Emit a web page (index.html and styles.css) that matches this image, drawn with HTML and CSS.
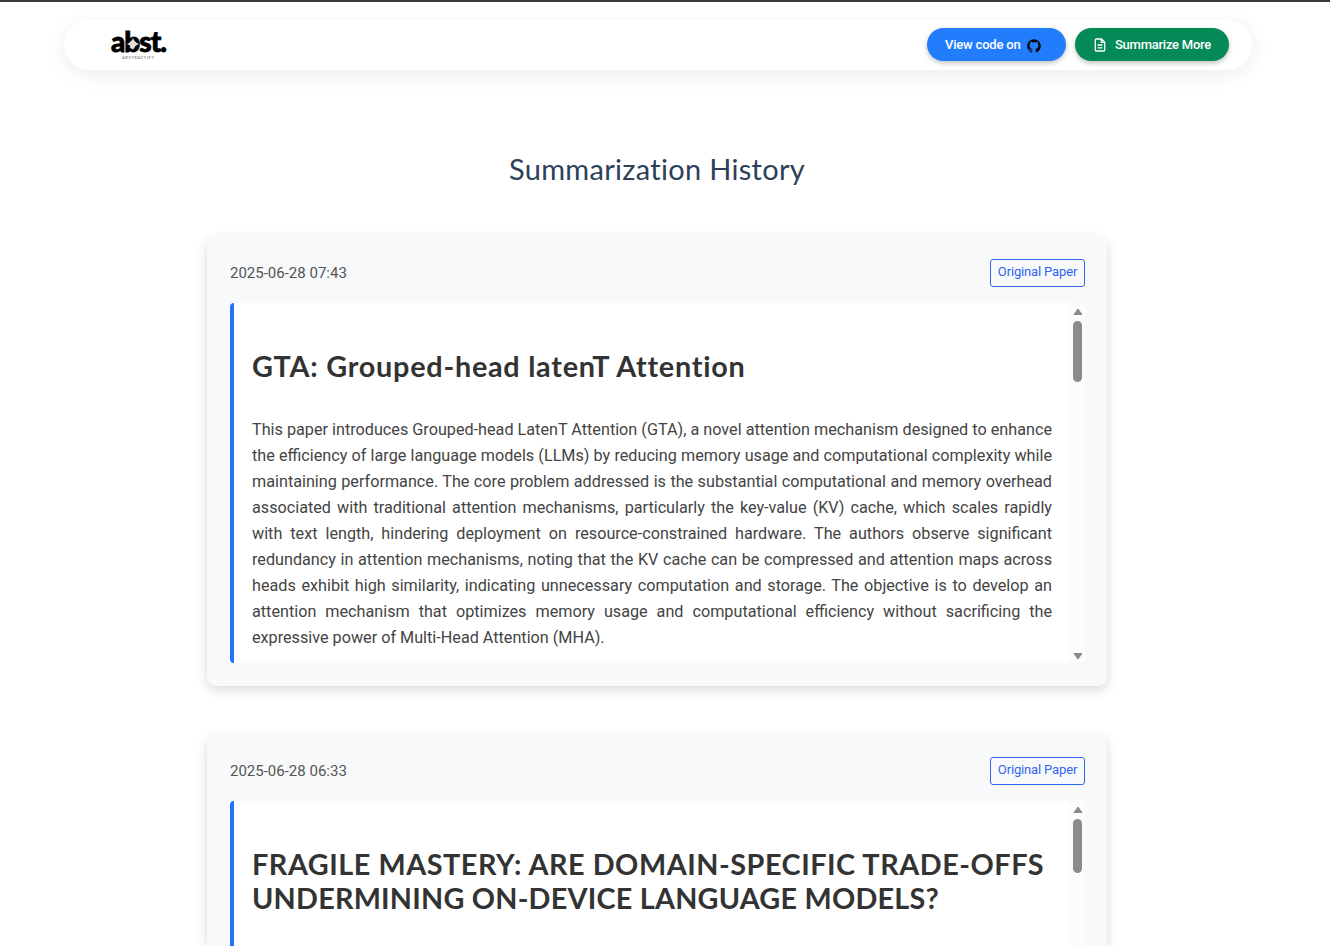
FILE: index.html
```html
<!DOCTYPE html>
<html lang="en">
<head>
<meta charset="utf-8">
<title>Summarization History</title>
<link rel="stylesheet" href="styles.css">
</head>
<body>
<header class="navbar">
  <div class="logo">
    <div class="logo-word"><span>abst.</span>
      <svg class="logo-star" width="12" height="12" viewBox="0 0 12 12"><path d="M6 0Q7.500 4.500 12 6Q7.500 7.500 6 12Q4.500 7.500 0 6Q4.500 4.500 6 0Z" fill="#e4e0d8"/></svg>
    </div>
    <div class="logo-sub">ABSTRACTIFY</div>
  </div>
  <nav class="actions">
    <a class="btn btn-code"><span class="code-label">View code on</span>
      <svg class="github" width="14" height="14" viewBox="0 0 16 16"><path fill="#080808" d="M8 .2C3.6.2.2 3.7.2 8c0 3.5 2.2 6.400 5.300 7.500.4.1.5-.2.5-.4v-1.500c-2.200.5-2.700-1-2.700-1-.3-.9-.8-1.200-.8-1.200-.7-.5.1-.5.1-.5.8.1 1.200.8 1.200.8.7 1.200 1.800.9 2.300.7.1-.5.3-.9.5-1.100-1.900-.2-3.700-.9-3.700-3.900 0-.9.3-1.500.8-2.100-.1-.2-.4-1 .1-2.100 0 0 .7-.2 2.200.8A7.500 7.500 0 0 1 8 3.700c.7 0 1.400.1 2 .3 1.500-1 2.200-.8 2.200-.8.4 1.100.2 1.900.1 2.100.5.6.8 1.200.8 2.100 0 3-1.800 3.700-3.700 3.900.3.3.6.8.6 1.500v2.300c0 .2.100.5.5.4 3.100-1.100 5.300-4 5.300-7.500C15.800 3.700 12.300.2 8 .2Z"/></svg>
    </a>
    <a class="btn btn-more">
      <svg width="12" height="14" viewBox="0 0 12 14" fill="none" stroke="#fff" stroke-width="1.300"><path d="M2.300 1H7.500L10.700 4.200V12.200Q10.700 13 9.900 13H2.100Q1.300 13 1.300 12.200V1.800Q1.300 1 2.300 1ZM7.300 1V4.400H10.700M3.500 7H8.500M3.500 9.800H8.500"/></svg>
      <span class="more-label">Summarize More</span>
    </a>
  </nav>
</header>
<main class="content">
  <h1 class="page-title"><span>Summarization History</span></h1>
  <article class="card">
    <div class="card-head"><time>2025-06-28 07:43</time><a class="paper">Original Paper</a></div>
    <div class="summary">
      <div class="summary-body">
        <h2 class="title-gta">GTA: Grouped-head latenT Attention</h2>
        <p>
          <span>This paper introduces Grouped-head LatenT Attention (GTA), a novel attention mechanism designed to enhance</span>
          <span>the efficiency of large language models (LLMs) by reducing memory usage and computational complexity while</span>
          <span>maintaining performance. The core problem addressed is the substantial computational and memory overhead</span>
          <span>associated with traditional attention mechanisms, particularly the key-value (KV) cache, which scales rapidly</span>
          <span>with text length, hindering deployment on resource-constrained hardware. The authors observe significant</span>
          <span>redundancy in attention mechanisms, noting that the KV cache can be compressed and attention maps across</span>
          <span>heads exhibit high similarity, indicating unnecessary computation and storage. The objective is to develop an</span>
          <span>attention mechanism that optimizes memory usage and computational efficiency without sacrificing the</span>
          <span>expressive power of Multi-Head Attention (MHA).</span>
        </p>
      </div>
      <div class="track">
        <svg width="10" height="8" viewBox="0 0 10 8"><path d="M5 1L9 6.500H1Z" fill="#8b8b8b" stroke="#8b8b8b" stroke-linejoin="round"/></svg>
        <div class="thumb"></div>
        <svg class="down" width="10" height="8" viewBox="0 0 10 8"><path d="M5 7L9 1.500H1Z" fill="#8b8b8b" stroke="#8b8b8b" stroke-linejoin="round"/></svg>
      </div>
    </div>
  </article>
  <article class="card card-cut">
    <div class="card-head"><time>2025-06-28 06:33</time><a class="paper">Original Paper</a></div>
    <div class="summary summary-cut">
      <div class="summary-body">
        <h2><span class="title-a">FRAGILE MASTERY: ARE DOMAIN-SPECIFIC TRADE-OFFS</span><br><span class="title-b">UNDERMINING ON-DEVICE LANGUAGE MODELS?</span></h2>
      </div>
      <div class="track">
        <svg width="10" height="8" viewBox="0 0 10 8"><path d="M5 1L9 6.500H1Z" fill="#8b8b8b" stroke="#8b8b8b" stroke-linejoin="round"/></svg>
        <div class="thumb thumb-short"></div>
      </div>
    </div>
  </article>
</main>
</body>
</html>
```

FILE: styles.css
```css
* { box-sizing: border-box; }
html, body { height: 946px; overflow: hidden; }
body {
  margin: 0;
  padding: 18px 78px 0 64px;
  border-top: 2px solid #3c3a3b;
  background: #fff;
  font-family: Roboto, sans-serif;
  color: #333;
}
.navbar {
  height: 50px;
  display: flex;
  justify-content: space-between;
  padding: 8px 23px 0 46px;
  border-radius: 25px;
  background: #fff;
  box-shadow: 0 4px 20px rgba(0, 0, 0, .08);
}
.logo { width: 60px; }
.logo-word {
  position: relative;
  height: 28px;
  font: 900 28px/28px Lato, sans-serif;
  letter-spacing: -1px;
  color: #000;
  -webkit-text-stroke: .8px #000;
}
.logo-word span { display: block; height: 28px; line-height: 29px; margin: -1px 0 0 1px; }
.logo-star { position: absolute; left: 17px; top: 11px; }
.logo-sub {
  padding: 1px 0 0 12px;
  font: 4px/4px Lato, sans-serif;
  letter-spacing: .6px;
  color: #666;
}
.actions { display: flex; gap: 9px; }
.btn {
  display: flex;
  align-items: center;
  height: 33px;
  border-radius: 17px;
  color: #fff;
  font-size: 13px;
  font-weight: 500;
  white-space: nowrap;
  box-shadow: 0 2px 5px rgba(0, 0, 0, .25);
}
.btn-code { width: 139px; padding-left: 18px; gap: 7px; background: #217dfb; }
.btn-more { width: 154px; padding-left: 19px; gap: 9px; background: #048a57; }
.code-label { letter-spacing: -.2px; }
.more-label { letter-spacing: -.25px; }
.github { margin-top: 2px; }
.content { width: 900px; margin: 0 0 0 143px; }
.page-title {
  margin: 0;
  padding-top: 79px;
  height: 166px;
  text-align: center;
  font: 400 29px/40px Lato, sans-serif;
  letter-spacing: .3px;
  font-variant-ligatures: none;
  color: #2c4059;
}
.card {
  height: 450px;
  margin-bottom: 48px;
  padding: 23px 22px 23px 23px;
  border-radius: 9px;
  background: #f8f9fb;
  box-shadow: 0 4px 12px rgba(0, 0, 0, .15);
}
.card-cut { height: 212px; margin-bottom: 0; padding-bottom: 0; border-radius: 9px 9px 0 0; }
.card-head {
  display: flex;
  justify-content: space-between;
  height: 28px;
  margin-bottom: 16px;
}
.card-head time { font-size: 15px; line-height: 28px; color: #555; }
.paper {
  width: 95px;
  height: 28px;
  border: 1px solid #2f66ee;
  border-radius: 3px;
  text-align: center;
  font-size: 13px;
  letter-spacing: -.15px;
  line-height: 24px;
  color: #2f66ee;
}
.summary {
  display: flex;
  height: 360px;
  border-left: 4px solid #2572fa;
  border-radius: 4px;
  background: #fff;
  overflow: hidden;
}
.summary-cut { height: 145px; border-radius: 4px 4px 0 0; }
.summary-body { width: 836px; padding: 46px 18px 0; }
.summary h2 {
  margin: 0 0 34px;
  font: 700 28.800px/34px Lato, sans-serif;
  font-variant-ligatures: none;
  white-space: nowrap;
}
.title-gta { letter-spacing: .75px; }
.title-a { letter-spacing: .53px; }
.title-b { letter-spacing: .22px; }
.summary p { margin: 0; padding-top: .4px; font-size: 16.200px; line-height: 25.920px; color: #444; }
.summary p span { display: block; text-align: justify; text-align-last: justify; white-space: nowrap; }
.summary p span:last-child { text-align-last: left; }
.track {
  width: 15px;
  display: flex;
  flex-direction: column;
  align-items: center;
  padding: 5px 0 3px;
  background: #fcfcfc;
}
.thumb { width: 9px; height: 61px; margin-top: 5px; border-radius: 5px; background: #8b8b8b; }
.thumb-short { height: 54px; }
.down { margin-top: auto; }
```
